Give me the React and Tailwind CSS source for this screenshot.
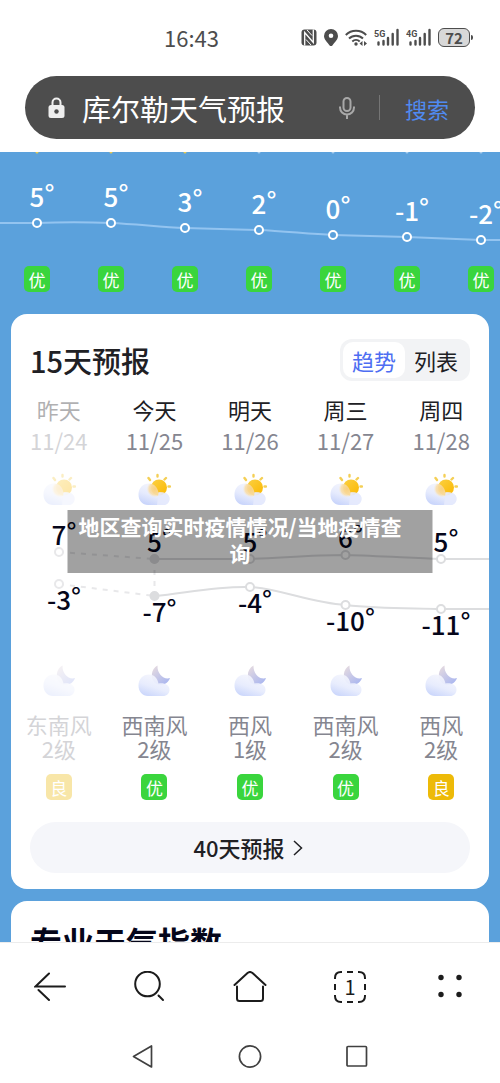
import { useState } from "react"

const hours = [
    { temp: 5, y: 71, sunny: true },
    { temp: 5, y: 71, sunny: true },
    { temp: 3, y: 76, sunny: true },
    { temp: 2, y: 78, sunny: false },
    { temp: 0, y: 83, sunny: false },
    { temp: -1, y: 85, sunny: false },
    { temp: -2, y: 88, sunny: false },
];

const days = [
    { name: "昨天", date: "11/24", high: 7, highY: 45, low: -3, lowY: 77, wind: "东南风", level: "2级", air: "良", past: true },
    { name: "今天", date: "11/25", high: 5, highY: 52, low: -7, lowY: 89, wind: "西南风", level: "2级", air: "优", today: true },
    { name: "明天", date: "11/26", high: 5, highY: 52, low: -4, lowY: 80, wind: "西风", level: "1级", air: "优" },
    { name: "周三", date: "11/27", high: 6, highY: 48, low: -10, lowY: 98, wind: "西南风", level: "2级", air: "优" },
    { name: "周四", date: "11/28", high: 5, highY: 52, low: -11, lowY: 102, wind: "西风", level: "2级", air: "良" },
];

const HOUR_WIDTH = 74;
const dayX = (index) => 48 + index * 95.5;

const AirBadge = ({ level }) => (
    <span className={`flex h-[26px] w-[26px] items-center justify-center rounded-[5px] text-[17px] leading-none text-white ${level === "优" ? "bg-[#3ad53d]" : "bg-[#edba08]"}`}>
        {level}
    </span>
);

const StatusIcons = () => (
    <div className="flex items-center gap-[7px] text-[#4d4d4d]">
        {/* NFC */}
        <svg className="h-[17px] w-4" viewBox="0 0 16 17" fill="none">
            <rect x="0.500" y="0.500" width="15" height="16" rx="3" fill="currentColor" />
            <path d="M3.700 16.500V3.500L12.300 13.500V0.500" stroke="#fff" strokeWidth="1.300" />
            <path d="M6 1L11 6.500M5 10.500L10 16" stroke="#fff" strokeWidth="1" />
        </svg>
        <svg className="h-[17px] w-[14px]" viewBox="0 0 14 17">
            <path fillRule="evenodd" d="M7 0a7 7 0 0 0-7 7c0 3.500 3.300 6.300 5.600 9.400q1.400 1.200 2.800 0C10.700 13.300 14 10.500 14 7a7 7 0 0 0-7-7zm0 4.500a2.300 2.300 0 1 1 0 4.600 2.300 2.300 0 0 1 0-4.600z" fill="currentColor" />
        </svg>
        <svg className="h-[17px] w-[22px]" viewBox="0 0 22 17" fill="none" stroke="currentColor" strokeWidth="2">
            <path d="M.8 6a14.500 14.500 0 0 1 20.400 0M4 9.500a10 10 0 0 1 14 0M7.300 12.500a5.500 5.500 0 0 1 7.400 0" />
            <circle cx="11" cy="15" r="1.700" fill="currentColor" stroke="none" />
            <path d="M17.500 12v5l-3-2.500zM19 12v5l3-2.500z" fill="currentColor" stroke="none" />
        </svg>
        {["5G", "4G"].map((label) => (
            <svg key={label} className="h-5 w-[25px]" viewBox="0 0 25 20">
                <text x="0" y="10" fontSize="9" fontWeight="700" fill="currentColor" className="font-['Roboto',sans-serif]">{label}</text>
                <path d="M4.500 15.500v2M9.500 14v3.500M14 11v6.500M18.700 7v10.500M23.500 3v14.500" stroke="currentColor" strokeWidth="2.400" strokeLinecap="round" />
            </svg>
        ))}
        <div className="flex items-center gap-px">
            <span className="flex h-[19px] w-8 items-center justify-center rounded-md border border-[#4d4d4d] bg-[#d8d8d8] text-[15px] leading-none font-semibold">72</span>
            <span className="h-[5px] w-0.5 rounded-r bg-[#4d4d4d]"></span>
        </div>
    </div>
);

const SearchBar = () => (
    <form className="mx-[25px] mt-0.5 flex h-[63px] items-center rounded-full bg-[#4d4d4d] pr-[26px] pl-[23px]" onSubmit={(e) => e.preventDefault()}>
        <svg className="h-[22px] w-[17px] shrink-0" viewBox="0 0 17 22" fill="none">
            <path d="M4.500 9V5.500a4 4 0 0 1 8 0V9" stroke="#eee" strokeWidth="2" />
            <rect x="0.500" y="8" width="16" height="13" rx="2.500" fill="#eee" />
            <circle cx="8.500" cy="14.500" r="2.200" fill="#4d4d4d" />
        </svg>
        <input
            type="text"
            aria-label="搜索内容"
            defaultValue="库尔勒天气预报"
            className="ml-[17px] h-11 min-w-0 flex-1 bg-transparent text-[29px] text-white outline-none"
        />
        <button type="button" aria-label="语音" className="mr-6 shrink-0">
            <svg className="h-[22px] w-4" viewBox="0 0 16 22" fill="none" stroke="#a8a8a8" strokeWidth="2">
                <rect x="4.500" y="1" width="7" height="13" rx="3.500" />
                <path d="M1 9.500v1a7 7 0 0 0 14 0v-1M8 17.500V22" />
            </svg>
        </button>
        <span className="mr-[25px] h-[25px] w-px bg-[#757575]"></span>
        <button type="submit" className="shrink-0 text-[22px] leading-8 text-[#508af0]">搜索</button>
    </form>
);

const Temperature = ({ x, y, value, color }) => (
    <text x={x + 5} y={y} textAnchor="middle" fontSize="26" fontWeight="500" fill={color} className="font-['Noto_Sans_CJK_SC',sans-serif]">
        {value}
        <tspan dy="-3">°</tspan>
    </text>
);

const HourlyStrip = () => (
    <section className="overflow-hidden">
        <svg className="block h-[100px] w-[518px]" viewBox="0 0 518 100" fill="none">
            <path d="M0 71H37C62 70 86 70 111 71C136 72 160 75 185 76L259 78C284 79 309 82 333 83L407 85L481 88H518" stroke="#93c4f0" strokeWidth="2" />
            {hours.map((hour, index) => {
                const x = 37 + index * HOUR_WIDTH;
                return (
                    <g key={index}>
                        <circle cx={x} cy="0" r="1.500" fill={hour.sunny ? "#e7c94f" : "#a9cdec"} />
                        <Temperature x={x} y={hour.y - 16} value={hour.temp} color="#fff" />
                        <circle cx={x} cy={hour.y} r="4" fill="#5ba1dc" stroke="#fff" strokeWidth="2" />
                    </g>
                );
            })}
        </svg>
        <ul className="mt-3.5 flex">
            {hours.map((hour, index) => (
                <li key={index} className="flex w-[74px] shrink-0 justify-center">
                    <AirBadge level="优" />
                </li>
            ))}
        </ul>
    </section>
);

const CLOUD = "M11 33C5.500 33 1.500 28.500 1.500 22.500C1.500 16 6 11.500 12 11.500C17.500 11.500 20.500 15.500 21.500 20.500C28 19.500 32.500 22.500 32.500 26.500C32.500 30.500 30 33 26 33Z";

const WeatherDefs = () => (
    <svg className="absolute h-0 w-0" aria-hidden="true">
        <defs>
            <linearGradient id="cloud" x1="0.800" y1="0" x2="0.300" y2="1">
                <stop offset="0" stopColor="#f8f8fd" />
                <stop offset="0.600" stopColor="#e6ebfd" />
                <stop offset="1" stopColor="#c8d4fb" />
            </linearGradient>
            <linearGradient id="sun" x1="0" y1="0" x2="1" y2="1">
                <stop offset="0" stopColor="#fbd044" />
                <stop offset="1" stopColor="#fbb800" />
            </linearGradient>
            <linearGradient id="moon" x1="0" y1="0" x2="0.800" y2="1">
                <stop offset="0" stopColor="#eaddde" />
                <stop offset="1" stopColor="#a9b6f0" />
            </linearGradient>
            <radialGradient id="glow">
                <stop offset="0" stopColor="#f8d080" />
                <stop offset="0.700" stopColor="#f9deaa" stopOpacity="0.900" />
                <stop offset="1" stopColor="#f6ecd8" stopOpacity="0" />
            </radialGradient>
            <clipPath id="cloudClip">
                <path d={CLOUD} />
            </clipPath>
        </defs>
    </svg>
);

const SunCloud = () => (
    <svg className="h-[34px] w-[34px]" viewBox="0 0 34 34">
        <path d={CLOUD} fill="url(#cloud)" />
        <circle cx="22" cy="15.500" r="8" fill="url(#sun)" />
        <path d="M20.500 3v1.500M27.500 7.500l1.500-1.500M31.500 14.500h1.500M13 8l-1.500-2" stroke="#f4cf55" strokeWidth="2.400" strokeLinecap="round" />
        <circle cx="18" cy="17" r="8.500" fill="url(#glow)" clipPath="url(#cloudClip)" />
        <path d="M21.500 20.500C28 19.500 32.500 22.500 32.500 26.500C32.500 30.500 30 33 26 33H20Z" fill="#e6eafd" fillOpacity="0.900" />
    </svg>
);

const MoonCloud = () => (
    <svg className="h-[34px] w-[34px]" viewBox="0 0 34 34">
        <path d="M20.500 2.500C14 6 13 15 18 20C24 24 31 21 33 15C27 17 20 11 20.500 2.500Z" fill="url(#moon)" />
        <path d={CLOUD} fill="url(#cloud)" fillOpacity="0.930" />
    </svg>
);

const TrendChart = () => (
    <svg className="block h-[156px] w-full" viewBox="0 0 478 156" fill="none">
        <g stroke="#dcdddf" strokeWidth="2">
            <path d="M48 45L143.500 52M48 77L143.500 89M143.500 52V89" stroke="#e8e8ea" strokeDasharray="5 6" />
            <path d="M143.500 52H239C270 51 300 48 334.500 48C370 49 400 51 430 52H478" />
            <path d="M143.500 89C175 86 205 79 239 80C270 82 300 96 334.500 98C370 102 400 101 430 102H478" />
        </g>
        {days.map((day, index) => (
            <g key={day.date}>
                {[day.highY, day.lowY].map((y) => (
                    <circle
                        key={y}
                        cx={dayX(index)}
                        cy={y}
                        r="4"
                        fill={day.today ? "#dcdddf" : "#fff"}
                        stroke={day.past ? "#e8e8ea" : "#dcdddf"}
                        strokeWidth="2"
                    />
                ))}
                <Temperature x={dayX(index)} y={day.highY - 7} value={day.high} color="#05061a" />
                <Temperature x={dayX(index)} y={day.lowY + 26} value={day.low} color="#05061a" />
            </g>
        ))}
    </svg>
);

const ForecastCard = () => {
    const [view, setView] = useState("趋势");

    return (
        <section className="mx-[11px] mt-[22px] rounded-2xl bg-white pt-[25px] pb-4">
            <div className="flex h-[42px] items-center justify-between px-[19px]">
                <h2 className="text-[29px] leading-10 font-medium text-[#202024]">15天预报</h2>
                <div className="flex h-[42px] rounded-xl bg-[#f2f3f5] p-[3px]">
                    {["趋势", "列表"].map((item) => (
                        <button
                            key={item}
                            type="button"
                            onClick={() => setView(item)}
                            className={`w-[62px] rounded-[10px] text-[22px] leading-9 ${view === item ? "bg-white text-[#4e6ef2]" : "text-[#202024]"}`}
                        >
                            {item}
                        </button>
                    ))}
                </div>
            </div>

            <div className="mt-[13px] mb-px grid grid-cols-5">
                {days.map((day) => (
                    <div key={day.date} className={`flex flex-col items-center text-[22px] leading-[31px] ${day.past ? "opacity-35" : ""}`}>
                        <span className="text-[#202024]">{day.name}</span>
                        <span className="mb-4 text-[#858690]">{day.date}</span>
                        <SunCloud />
                    </div>
                ))}
            </div>

            <div className="relative">
                <TrendChart />
                {/* Caption over the chart */}
                <p className="absolute top-[3px] left-1/2 h-[63px] w-[365px] -translate-x-1/2 bg-black/37 pt-[3px] pr-6 pl-1 text-center text-[21px] leading-[27px] font-bold text-white">
                    地区查询实时疫情情况/当地疫情查询
                </p>
            </div>

            <div className="grid grid-cols-5">
                {days.map((day) => (
                    <div key={day.date} className={`flex flex-col items-center text-[22px] leading-6 text-[#858690] ${day.past ? "opacity-35" : ""}`}>
                        <MoonCloud />
                        <span className="mt-[15px]">{day.wind}</span>
                        <span className="mb-3.5">{day.level}</span>
                        <AirBadge level={day.air} />
                    </div>
                ))}
            </div>

            <div className="mt-[22px] px-[19px]">
                <button type="button" className="flex h-[51px] w-full items-center justify-center gap-2 rounded-full bg-[#f5f6fa] pr-1 text-[22px] font-medium text-[#202024]">
                    40天预报
                    <svg className="h-4 w-[10px]" viewBox="0 0 10 16" fill="none" stroke="currentColor" strokeWidth="1.500">
                        <path d="M1 1l7.500 7L1 15" />
                    </svg>
                </button>
            </div>
        </section>
    );
};

const BrowserBar = () => (
    <nav className="grid h-[88px] grid-cols-5 items-center justify-items-center border-t border-[#ececec] text-[#1c1c1c]">
        <button type="button" aria-label="返回">
            <svg className="h-8 w-8" viewBox="0 0 32 32" fill="none" stroke="currentColor" strokeWidth="2" strokeLinecap="round">
                <path d="M31 15.500H1.500L15 2.500M4.500 19L15 29" />
            </svg>
        </button>
        <button type="button" aria-label="查找">
            <svg className="h-8 w-8" viewBox="0 0 32 32" fill="none" stroke="currentColor" strokeWidth="2" strokeLinecap="round">
                <circle cx="13.500" cy="13" r="12.300" />
                <path d="M24.500 24.500l4.500 4.500" />
            </svg>
        </button>
        <button type="button" aria-label="主页">
            <svg className="h-8 w-[34px]" viewBox="0 0 34 32" fill="none" stroke="currentColor" strokeWidth="2" strokeLinecap="round">
                <path d="M1.500 14L14.500 2Q17 0 19.500 2L32.500 14M4 15.500V27.500Q4 30 6.500 30H27.500Q30 30 30 27.500V15.500" />
            </svg>
        </button>
        <button type="button" aria-label="标签页" className="relative flex h-8 w-8 items-center justify-center">
            <svg className="absolute inset-0 h-8 w-8" viewBox="0 0 32 32" fill="none" stroke="currentColor" strokeWidth="2">
                <path d="M1 8V7Q1 1 7 1H8M24 1h1q6 0 6 6v1M31 24v1q0 6-6 6h-1M8 31H7Q1 31 1 25V24M13 1h6M13 31h6M1 13v6M31 13v6" />
            </svg>
            <span className="text-[20px] leading-none">1</span>
        </button>
        <button type="button" aria-label="菜单">
            <svg className="h-8 w-8" viewBox="0 0 32 32" fill="currentColor">
                <circle cx="7" cy="6.500" r="2.700" />
                <circle cx="25" cy="6.500" r="2.700" />
                <circle cx="7" cy="23.500" r="2.700" />
                <circle cx="25" cy="23.500" r="2.700" />
            </svg>
        </button>
    </nav>
);

const SystemBar = () => (
    <div className="flex h-[53px] items-center justify-center gap-[84px] text-[#404040]">
        <button type="button" aria-label="系统返回">
            <svg className="h-6 w-[22px]" viewBox="0 0 22 24" fill="none" stroke="currentColor" strokeWidth="1.700" strokeLinejoin="round">
                <path d="M19.500 1V22L1.500 11.500Z" />
            </svg>
        </button>
        <button type="button" aria-label="桌面">
            <svg className="h-6 w-6" viewBox="0 0 24 24" fill="none" stroke="currentColor" strokeWidth="1.700">
                <circle cx="12" cy="11.500" r="10.600" />
            </svg>
        </button>
        <button type="button" aria-label="最近任务">
            <svg className="h-6 w-[22px]" viewBox="0 0 22 24" fill="none" stroke="currentColor" strokeWidth="1.700">
                <rect x="1" y="1.500" width="19.500" height="19.500" rx="1" />
            </svg>
        </button>
    </div>
);

const App = () => {
    return (
        <div className="flex h-screen flex-col bg-white font-['Noto_Sans_CJK_SC',sans-serif]">
            <WeatherDefs />
            <header className="shrink-0 pb-[13px]">
                <div className="flex h-[74px] items-center justify-between pr-[27px] pl-[164px]">
                    <time className="text-[22px] leading-7 text-[#4d4d4d]">16:43</time>
                    <StatusIcons />
                </div>
                <SearchBar />
            </header>

            <main className="min-h-0 flex-1 overflow-hidden bg-[#5ba1dc]">
                <HourlyStrip />
                <ForecastCard />
                <section className="mx-[11px] mt-3 rounded-t-2xl bg-white px-[19px] pt-5 pb-10">
                    <h2 className="text-[32px] leading-10 font-bold text-[#05061a]">专业天气指数</h2>
                </section>
            </main>

            <footer className="shrink-0 bg-white">
                <BrowserBar />
                <SystemBar />
            </footer>
        </div>
    );
};

export default App;
